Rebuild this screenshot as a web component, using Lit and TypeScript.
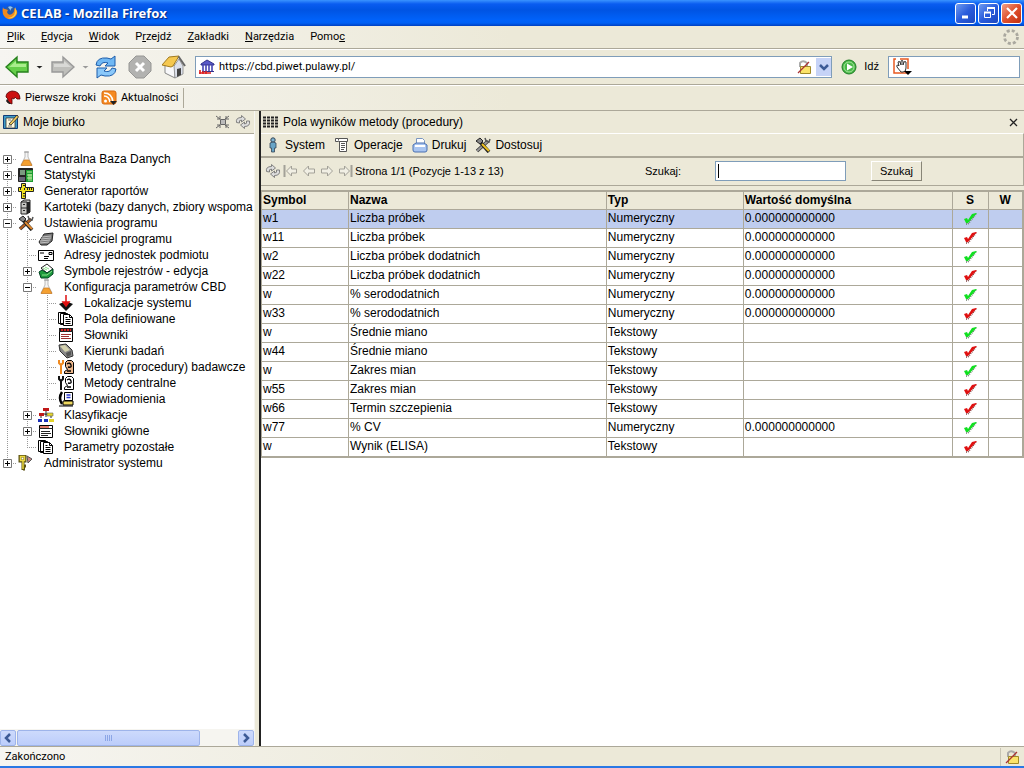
import { LitElement, html, css, svg, nothing, TemplateResult } from "lit";
import { customElement } from "lit/decorators.js";
import { classMap } from "lit/directives/class-map.js";

const flask = svg`<path d="M7 1h3v5l4 8H3l4-8z" fill="#f4f4f4" stroke="#aaa" stroke-width=".8"/><path d="M6 9h5l3 5.5H3z" fill="#f4a030" stroke="#c87820" stroke-width=".7"/><path d="M6 1h5" stroke="#999"/>`;
const pages = svg`<path d="M.5 1.500h7v11h-7zM2.500 2.500h7v11h-7z" fill="#fff" stroke="#000"/><path d="M5.500 3.500h6l3 3v8h-9z" fill="#fff" stroke="#000"/><path d="M11.500 3.500v3h3M7.500 6.500h2M7.500 8.500h5M7.500 10.500h5M7.500 12.500h5" fill="none" stroke="#000"/>`;
const method = (wrench: string, skin: string) => svg`<path d="M1 1v3l2 2 2-2V1M3 5v10" fill="none" stroke="${wrench}" stroke-width="2"/><path d="M7.500 3.500l2-2h4l2 2v11h-9v-2l3-2-2-3z" fill="${skin}" stroke="#000"/><path d="M9 5q3-2 4 1t-3 2M9 12h4" fill="none" stroke="#000" stroke-width="1.300"/>`;
const cycle = svg`<path d="M1.500 8.500q-1-5 5-5V1.500l4 3.500-4 3v-2q-3 0-2 3zM14.500 7q1 5.500-5 5.500v2l-4-3.500 4-3v2q3 0 2-3z" fill="#ddd" stroke="#777" stroke-width=".9"/>`;
const pageArrow = svg`<path d="M2.500 8l5-5v3h6v4h-6v3z" fill="#f1efe4" stroke="#a3a198"/>`;
const lock = svg`<path d="M4 8V4q3-3.500 7 0v3" fill="none" stroke="#aaa" stroke-width="2"/><path d="M4.500 7.500h10v7h-10z" fill="#fbe36a" stroke="#a08a28"/><path d="M2 14L13 3" stroke="#a33" stroke-width="1.200"/>`;
const tools = (a: string, b: string) => svg`<path d="M2 14L13 4" stroke="#333" stroke-width="3.500"/><path d="M2 14L13 4" stroke="${a}" stroke-width="2"/><path d="M10 1l1 3 3 1 1-3" fill="none" stroke="#555" stroke-width="1.500"/><path d="M1 4l4-3 3 3-3 3z" fill="#888" stroke="#222"/><path d="M6 6l8 9" stroke="#222" stroke-width="3.500"/><path d="M7 7l7 7" stroke="${b}" stroke-width="2"/>`;
const check = (fill: string, shade: string) => svg`<path d="M4 13h2l8-10" fill="none" stroke="${shade}" stroke-width="1.500" stroke-dasharray="1 1"/><path d="M2 8l3-1 1 2 4-6 4-1h1L6 12H4z" fill="${fill}"/>`;

const icons: Record<string, TemplateResult<2>> = {
  firefox: svg`<circle cx="8" cy="7" r="6" fill="#2a5ba8"/><path d="M6 2q3-2 5 1-3 0-2 3z" fill="#8cc4f4"/><path d="M1 2q0 2 2 2l3 1-1 2q1 4 5 2 3-2 2-6 4 2 3 6-3 6-9 5-7-3-5-12z" fill="#f08a20"/><path d="M13 2q3 5 0 9-3 3-7 2 9-1 7-11z" fill="#fbd04a"/>`,
  min: svg`<path d="M4 12h6" stroke="#fff" stroke-width="3"/>`,
  restore: svg`<path d="M6.500 6V3.500h7v6H11" fill="none" stroke="#fff"/><path d="M6 3h8" stroke="#fff" stroke-width="2"/><path d="M3.500 7.500h6v5h-6z" fill="none" stroke="#fff"/><path d="M3 7.500h7" stroke="#fff" stroke-width="2"/>`,
  closeWin: svg`<path d="M3 3l10 10M13 3L3 13" stroke="#fff" stroke-width="2.200"/>`,
  back: svg`<path d="M1 12L12 2v5h11v10H12v5z" fill="#65ce49" stroke="#26801c" stroke-width="1.400"/><path d="M4 12l7-6v3h10v3z" fill="#a9ed8c"/>`,
  forward: svg`<path d="M23 12L12 2v5H1v10h11v5z" fill="#bfbfbb" stroke="#999" stroke-width="1.400"/><path d="M20 12l-7-6v3H3v3z" fill="#d9d9d6"/>`,
  reload: svg`<path d="M2 10q1-8 11-7l4 1 4-3v10H11l3-3q-6-2-8 3z" fill="#70b8f4" stroke="#1c5caa"/><path d="M22 14q-1 8-11 7l-4-1-4 3V13h10l-3 3q6 2 8-3z" fill="#8ac8fa" stroke="#1c5caa"/>`,
  stop: svg`<path d="M8 1h8l7 7v8l-7 7H8l-7-7V8z" fill="#b2b2b0" stroke="#969694"/><path d="M8 8l8 8M16 8l-8 8" stroke="#fff" stroke-width="3"/>`,
  home: svg`<path d="M3 11v7l10 5V11L8 5z" fill="#f8f8fa" stroke="#888"/><path d="M13 23l8-4v-8l-4-7-5 7z" fill="#dde1ec" stroke="#888" stroke-width=".8"/><path d="M0 10L7 2l10-1-6 10-2 1z" fill="#f5c850" stroke="#a07a20"/><path d="M16.500 1.500L23 11" stroke="#666" stroke-width="2"/><path d="M15 14l4-1v7l-4 2z" fill="#444"/>`,
  site: svg`<path d="M2 5l6-4 7 4v1H2z" fill="#5a5ac8" stroke="#33338c"/><path d="M4 6v7M7 6v7M10 6v7M13 6v7" stroke="#4646b4" stroke-width="1.600"/><path d="M3 12.500h12" stroke="#33338c"/><path d="M0 14h12M1 11v4M4 12v3M7 12v3" stroke="#dd2020" stroke-width="1.600"/>`,
  lock,
  go: svg`<circle cx="8" cy="8" r="7" fill="#49b848" stroke="#1d7c24"/><circle cx="8" cy="8" r="5" fill="none" stroke="#a4e49a"/><path d="M6 4.500l6 3.500-6 3.500z" fill="#fff"/>`,
  throbber: svg`<circle cx="8" cy="8" r="6.500" fill="none" stroke="#aaa89f" stroke-width="2.800" stroke-dasharray="3 2.100"/>`,
  hand: svg`<path d="M4 1H2v14h14" fill="none" stroke="#e85a20" stroke-width="1.500"/><path d="M8 1h8v10" fill="none" stroke="#e85a20" stroke-width="1.500"/><path d="M5 9q-1-2 1-2l1 1-1-4q1-1 2 0l1 3V3q1-1 2 0v4l1-3q1-1 2 0v6q0 4-3 4H9z" fill="#fff" stroke="#333"/><path d="M12 13h8l-4 4z" fill="#000"/>`,
  dino: svg`<path d="M1 7q0-5 6-6 8 0 8 8h-3l-2-2-1 2-2-1v6l-5-2 1-3z" fill="#cc1010" stroke="#500" stroke-width=".8"/><path d="M2 9l4 5H4L1 11z" fill="#222"/>`,
  rss: svg`<rect x="1" y="1" width="14" height="13" rx="2" fill="#f58a22" stroke="#d86a10"/><circle cx="4.500" cy="11" r="1.500" fill="#fff"/><path d="M3 6q5 0 6 6M3 3q8 0 9 9" fill="none" stroke="#fff" stroke-width="1.600"/><path d="M9 11h7l-3.500 4z" fill="#222"/>`,
  desk: svg`<path d="M.5 1.500h14v13H.5z" fill="#3e9cc8" stroke="#123c78"/><path d="M3 4h9v10H3z" fill="#fffbe0" stroke="#333" stroke-width=".8"/><path d="M6 10L14 1l1.500 2L8 11z" fill="#f5d060" stroke="#222" stroke-width=".8"/><path d="M5 6h3M5 12h4" stroke="#777"/>`,
  shrink: svg`<path d="M5.500 5.500h5v5h-5z" fill="#bbb" stroke="#666"/><path d="M1 2l4 3M5 2v3H2M14 2l-4 3M11 2v3h3M1 14l4-3M5 14v-3H2M14 14l-4-3M11 14v-3h3" fill="none" stroke="#666"/>`,
  cycle,
  flask,
  stats: svg`<path d="M.5 1.500h14v13H.5z" fill="#222" stroke="#222"/><path d="M2 3h5v5H2z" fill="#7a9a80"/><path d="M8 3h7v12H8z" fill="#1a9a30"/><path d="M9 5h5M9 8h5M9 11h5M11 7v7M13 7v7" stroke="#c0f0a0"/><path d="M1 10h6v4H1z" fill="#667"/>`,
  ruler: svg`<path d="M3.500.5h4v4h8v4h-8v7h-4v-7h-3v-4h3z" fill="#f4e420" stroke="#222"/><path d="M2.500 5v2M5 2.500h2M5 10.500h2M5 13h2M9.500 5v2M11.500 5v2M13.500 5v2M6.500 5v2" stroke="#222"/>`,
  cabinet: svg`<path d="M3 3l3-2h6v12l-3 2H3z" fill="#c6c6c2" stroke="#222"/><path d="M9 3h3v11H9z" fill="#222"/><path d="M3 3h6v12M3 9h6M5 5.500h2M5 11.500h2" fill="none" stroke="#222"/>`,
  hammer: tools("#b86020", "#e08a30"),
  owner: svg`<path d="M1 11l5-8 9-1-1 8-5 4H3z" fill="#777" stroke="#222"/><path d="M4 6l9-1M3 8l10-1M2 10l10-1M2 12l9-1" stroke="#c0c0c0"/>`,
  card: svg`<path d="M.5 3.500h15v10H.5z" fill="#fff" stroke="#000"/><path d="M2 6h4M11 5.500h3v2h-3zM6 9.500h5M6 11.500h4" fill="none" stroke="#000"/>`,
  registers: svg`<path d="M3 5l6-4 6 5-6 4z" fill="#fff" stroke="#222"/><path d="M1 9l3-2 5 3 6-4v5l-5 4H3z" fill="#1c9a3c" stroke="#042"/><path d="M5 5l4 2M7 4l4 2M4 12h5l5-4" fill="none" stroke="#8be08b"/>`,
  pin: svg`<path d="M1 9l5-2h4l5 2-4 4-3 3-3-3z" fill="#111"/><path d="M8 0v9M5 7l3 4 3-4z" fill="#e01010" stroke="#e01010" stroke-width="1.500"/>`,
  pages,
  dict: svg`<path d="M1.500 1.500h13v13h-13z" fill="#fff" stroke="#000"/><path d="M1 1h14v4H1z" fill="#222"/><path d="M3 3h10" stroke="#e02020" stroke-width="2" stroke-dasharray="2 1"/><path d="M3 7.500h10M3 9.500h8M3 11.500h10" stroke="#a03030"/>`,
  research: svg`<path d="M1 2l7-1 6 6 1 6-6 2-7-7z" fill="#888" stroke="#333"/><path d="M2 3l5-1 5 5-5 2z" fill="#d4d2ae"/><path d="M8 10l5-2v4l-4 2z" fill="#555"/>`,
  methodOn: method("#f08a20", "#ecb68a"),
  method: method("#111", "#fff"),
  notify: svg`<path d="M6.500 1.500h8v8h-8z" fill="#fff" stroke="#000"/><path d="M8.500 4h4M8.500 6.500h4" stroke="#2a3ad0" stroke-width="1.500"/><path d="M5 10h10v4H5z" fill="#eed860" stroke="#000"/><path d="M4 1q-4 6 0 12" fill="none" stroke="#000" stroke-width="2.500"/><path d="M1 15h14" stroke="#000"/>`,
  classes: svg`<path d="M8 3v5M3 11V7h10v4M8 7v3" fill="none" stroke="#222"/><path d="M5 1h6v3H5z" fill="#c01818"/><path d="M1 6h5v3H1z" fill="#c01818"/><path d="M9 6h6v3H9z" fill="#e4d42c" stroke="#665" stroke-width=".6"/><path d="M0 12h4v3H0zM6 12h4v3H6z" fill="#1c30b8"/><path d="M11 12h5v3h-5z" fill="#e4d42c"/>`,
  mainDict: svg`<path d="M1.500 2.500h13v12h-13z" fill="#fff" stroke="#000"/><path d="M2 3h9v2H2z" fill="#e07a6a"/><path d="M1 5.500h14M3 8.500h9M3 10.500h10M3 12.500h7" stroke="#222"/>`,
  keys: svg`<path d="M2 1h5v5H2zM5 6v9M5 11h3M5 14h2" fill="none" stroke="#5a5010" stroke-width="3"/><path d="M2.500 1.500h4v4h-4zM5 6v8" fill="none" stroke="#ecd840" stroke-width="1.500"/><path d="M9 1l5 3-4 4z" fill="#c88" stroke="#555"/>`,
  grid: svg`<path d="M0 3.500h15M0 6.500h15M0 9.500h15M0 12.500h15" stroke="#222" stroke-width="2" stroke-dasharray="3 1"/>`,
  person: svg`<circle cx="8" cy="3" r="2.200" fill="#7eb4d2" stroke="#345"/><path d="M5 6q3-2 6 0v5H9.500v4h-3v-4H5z" fill="#68a4c6" stroke="#345" stroke-width=".8"/>`,
  script: svg`<path d="M4.500 3.500V1.500h-3v3h3M4.500 1.500h9v3h-9M5.500 4v10.500h7V4.500" fill="#fff" stroke="#555"/><path d="M7 6.500h4M7 8.500h4M7 10.500h4M7 12.500h3" stroke="#555"/>`,
  printer: svg`<path d="M4.500 8V1.500h6l2 2V8" fill="#fff" stroke="#7a96c0"/><path d="M1 8l3-2h8l3 2v5q0 2-2 2H3q-2 0-2-2z" fill="#a8c4f0" stroke="#4a70b0"/><path d="M3 9h10" stroke="#fff" stroke-width="2"/>`,
  adjust: tools("#999", "#ecc020"),
  prev: pageArrow,
  next: svg`<g transform="translate(16 0) scale(-1 1)">${pageArrow}</g>`,
  first: svg`<path d="M1.500 2v12" stroke="#a3a198" stroke-width="2"/><path d="M3.500 8l5-5v3h5v4h-5v3z" fill="#f1efe4" stroke="#a3a198"/>`,
  last: svg`<path d="M14.500 2v12" stroke="#a3a198" stroke-width="2"/><path d="M12.500 8l-5-5v3h-5v4h5v3z" fill="#f1efe4" stroke="#a3a198"/>`,
  close: svg`<path d="M5 5l7 7M12 5l-7 7" stroke="#222" stroke-width="1.300"/>`,
  ok: check("#10e020", "#6a7a6a"),
  no: check("#e01010", "#804040"),
  left: svg`<path d="M10 4L6 8l4 4" fill="none" stroke="#3c5a96" stroke-width="2.500"/>`,
  right: svg`<path d="M6 4l4 4-4 4" fill="none" stroke="#3c5a96" stroke-width="2.500"/>`,
  down: svg`<path d="M4 6l4 4 4-4" fill="none" stroke="#3c5a96" stroke-width="2.500"/>`,
};

const icon = (name: string, size = 16) =>
  html`<svg class="icon" width=${size} height=${size} viewBox=${size === 24 ? "0 0 24 24" : "0 0 16 16"} aria-hidden="true">${icons[name]}</svg>`;

interface Node { label: string; icon: string; open?: boolean; children?: Node[] }
const leaf = (label: string, icon: string): Node => ({ label, icon });
const closed = (label: string, icon: string): Node => ({ label, icon, open: false });

const tree: Node[] = [
  closed("Centralna Baza Danych", "flask"),
  closed("Statystyki", "stats"),
  closed("Generator raportów", "ruler"),
  closed("Kartoteki (bazy danych, zbiory wspoma", "cabinet"),
  { label: "Ustawienia programu", icon: "hammer", open: true, children: [
    leaf("Właściciel programu", "owner"),
    leaf("Adresy jednostek podmiotu", "card"),
    closed("Symbole rejestrów - edycja", "registers"),
    { label: "Konfiguracja parametrów CBD", icon: "flask", open: true, children: [
      leaf("Lokalizacje systemu", "pin"),
      leaf("Pola definiowane", "pages"),
      leaf("Słowniki", "dict"),
      leaf("Kierunki badań", "research"),
      leaf("Metody (procedury) badawcze", "methodOn"),
      leaf("Metody centralne", "method"),
      leaf("Powiadomienia", "notify"),
    ] },
    closed("Klasyfikacje", "classes"),
    closed("Słowniki główne", "mainDict"),
    leaf("Parametry pozostałe", "pages"),
  ] },
  closed("Administrator systemu", "keys"),
];

const N = "Numeryczny", T = "Tekstowy", Z = "0.000000000000";
const rows: [string, string, string, string, boolean][] = [
  ["w1", "Liczba próbek", N, Z, true],
  ["w11", "Liczba próbek", N, Z, false],
  ["w2", "Liczba próbek dodatnich", N, Z, true],
  ["w22", "Liczba próbek dodatnich", N, Z, false],
  ["w", "% serododatnich", N, Z, true],
  ["w33", "% serododatnich", N, Z, false],
  ["w", "Średnie miano", T, "", true],
  ["w44", "Średnie miano", T, "", false],
  ["w", "Zakres mian", T, "", true],
  ["w55", "Zakres mian", T, "", false],
  ["w66", "Termin szczepienia", T, "", false],
  ["w77", "% CV", N, Z, true],
  ["w", "Wynik (ELISA)", T, "", false],
];

const menu: [string, string, string][] = [
  ["", "P", "lik"], ["", "E", "dycja"], ["", "W", "idok"], ["P", "r", "zejdź"],
  ["", "Z", "akładki"], ["", "N", "arzędzia"], ["Pomo", "c", ""],
];

@customElement("app-root")
export class AppRoot extends LitElement {
  static styles = css`
    :host { display: flex; flex-direction: column; height: 100vh; overflow: hidden; background: #ece9d8; color: #000; font: 12px/16px "Liberation Sans", Arial, sans-serif; }
    * { box-sizing: border-box; }
    button { display: flex; align-items: center; padding: 0; border: 0; background: none; color: inherit; font: inherit; white-space: nowrap; }
    a { color: inherit; text-decoration: none; }
    input { font: inherit; }
    .icon { display: block; flex: none; }
    .grow { flex: 1; }
    .title { display: flex; align-items: center; gap: 2px; height: 26px; flex: none; padding: 0 2px; background: linear-gradient(#3a93ff, #0a5cf0 4px, #0054e3 10px, #0062fa 20px, #0060f5 23px, #0040c0); color: #fff; }
    .title h1 { flex: 1; margin: 0 0 0 1px; font: bold 13px/20px "Noto Sans", sans-serif; text-shadow: 1px 1px 1px #0a2a80; }
    .title button { width: 21px; height: 21px; justify-content: center; border: 1px solid #fff; border-radius: 3px; background: linear-gradient(135deg, #6f9bf0, #2a5cdc 50%, #1c48c0); }
    .title .quit { background: linear-gradient(135deg, #f0a088, #e0502c 50%, #c03010); }
    .chrome { font: 11px/14px Roboto, Tahoma, sans-serif; flex: none; display: flex; align-items: center; background: linear-gradient(90deg, #f6f5f1, #ece9d8 50%); }
    .menubar { height: 23px; padding: 0 5px 0 7px; gap: 16px; border-bottom: 1px solid #aca899; }
    .nav { height: 36px; padding: 0 4px 0 5px; border-top: 1px solid #fff; border-bottom: 1px solid #aca899; }
    .tri { width: 7px; height: 3px; margin: 0 8px 0 7px; background: #222; clip-path: polygon(0 0, 100% 0, 50% 100%); }
    .tri.off { margin: 0 5px 0 7px; background: #999; }
    .nav .reload { margin-right: 10px; }
    .nav .stop { margin-right: 10px; }
    .field { display: flex; align-items: center; height: 22px; border: 1px solid #7f9db9; background: #fff; }
    .url { flex: 1; margin: 0 9px 0 9px; padding: 1px 0 1px 3px; gap: 4px; }
    .field input { flex: 1; min-width: 0; padding: 0; border: 0; outline: 0; background: none; }
    .drop { width: 15px; height: 18px; justify-content: center; background: #c6d3f7; }
    .go { gap: 7px; margin-right: 9px; }
    .find { width: 132px; padding-left: 3px; }
    .bookmarks { height: 26px; padding: 0 5px; border-top: 1px solid #fff; border-bottom: 1px solid #aca899; }
    .bookmarks a { display: flex; align-items: center; gap: 4px; margin-right: 5px; }
    .bookmarks i { width: 1px; height: 20px; background: #aca899; }
    .main { flex: 1; min-height: 0; display: flex; }
    .side { flex: none; width: 254px; display: flex; flex-direction: column; background: #fff; }
    .sidehead { display: flex; align-items: center; gap: 4px; height: 23px; padding: 0 3px; background: #ece9d8; border-bottom: 1px solid #aca899; }
    .split { width: 7px; flex: none; border-left: 1px solid #f6f5f1; border-right: 2px solid #222; background: #ece9d8; }
    .tree { flex: 1; min-height: 0; margin: 0; padding: 17px 0 0 0; overflow: hidden; list-style: none; }
    .node { display: flex; align-items: center; height: 16px; white-space: nowrap; overflow: hidden; }
    .node .icon { margin-right: 10px; }
    .branch { display: block; flex: none; }
    .scroll { display: flex; align-items: center; height: 17px; flex: none; background: #f6f5f0; gap: 1px; }
    .scroll button, .thumb { height: 16px; border: 1px solid #9eb4ea; border-radius: 2px; background: linear-gradient(#cddafc, #bccdfb); }
    .scroll button { width: 16px; justify-content: center; }
    .thumb { width: 72%; display: flex; align-items: center; justify-content: center; gap: 1px; }
    .thumb i { width: 1px; height: 6px; background: #8ca6e6; }
    .panel { flex: 1; min-width: 0; display: flex; flex-direction: column; background: #fff; }
    .bar { display: flex; align-items: center; background: #ece9d8; flex: none; }
    .head { height: 22px; gap: 4px; padding: 0 3px 0 2px; }
    .head h2, .sidehead h2 { flex: 1; margin: 0; font: inherit; }
    .tools { height: 23px; gap: 9px; padding: 0 4px; border-top: 1px solid #fff; border-right: 1px solid #aca899; }
    .tools button { gap: 4px; }
    .paging { height: 30px; padding: 0 101px 1px 4px; gap: 2px; border: 1px solid #aca899; border-top-width: 2px; border-left: 0; font-size: 11px; }
    .paging .pos { white-space: nowrap; }
    .search { display: flex; align-items: center; margin-left: auto; }
    .query { position: relative; margin: 0 25px 0 34px; }
    .query input { display: block; width: 131px; height: 20px; border: 1px solid #7f9db9; padding: 0 4px; background: #fff; }
    .caret { position: absolute; left: 3px; top: 3px; width: 1px; height: 14px; background: #000; }
    .search button { width: 51px; height: 20px; justify-content: center; border: 1px solid; border-color: #fff #888577 #888577 #fff; background: #ece9d8; }
    .spacer { height: 4px; flex: none; background: #ece9d8; }
    table { width: 100%; table-layout: fixed; border-collapse: collapse; border: 2px solid #aca899; border-left-width: 1px; flex: none; }
    th, td { height: 19px; padding: 0 0 0 1px; border: 1px solid #aca899; text-align: left; white-space: nowrap; overflow: hidden; line-height: 16px; }
    th { height: 18px; background: #ece9d8; }
    td { padding: 0 0 2px 1px; }
    .mid { text-align: center; padding: 0; }
    .mid .icon { margin: 0 auto; }
    .c-symbol { width: 87px; } .c-type { width: 18%; } .c-value { width: 27.4%; } .c-s { width: 36px; } .c-w { width: 35px; }
    .selected td { background: #bfcdef; }
    .status { height: 22px; padding: 0 4px 0 5px; border-top: 1px solid #aca899; border-bottom: 2px solid #2a78e4; }
    .security { display: flex; align-items: center; height: 18px; padding-left: 3px; border-left: 1px solid #c8c5b4; }
  `;

  private branch(depth: number, guides: boolean[], node: Node, first: boolean, last: boolean) {
    const x = depth * 20 + 7;
    const own = depth * 20 + 18;
    const dots = (x1: number, y1: number, x2: number, y2: number) =>
      svg`<path d="M${x1} ${y1}L${x2} ${y2}" stroke="#999" stroke-dasharray="1 1"/>`;
    return html`<svg class="branch" width=${own} height="16" viewBox="0 0 ${own} 16" aria-hidden="true">
      ${guides.map((on, i) => (on ? dots(i * 20 + 7.5, 0, i * 20 + 7.5, 16) : nothing))}
      ${dots(x + 0.5, first ? 8 : 0, x + 0.5, last ? 8 : 16)}
      ${dots(x, 8.5, own - 2, 8.5)}
      ${node.open === undefined ? nothing : svg`<path d="M${x - 3.5} 4.500h8v8h-8z" fill="#fff" stroke="#777"/><path d="M${x - 2} 8.500h5${node.open ? "" : `M${x + 0.5} 6v5`}" stroke="#000"/>`}
    </svg>`;
  }

  private nodes(list: Node[], depth = 0, guides: boolean[] = []): unknown {
    return list.map((n, i) => {
      const last = i === list.length - 1;
      return html`<li class="node" role="treeitem" aria-level=${depth + 1}>${this.branch(depth, guides, n, depth === 0 && i === 0, last)}${icon(n.icon)}<a href="#">${n.label}</a></li>
      ${n.children ? this.nodes(n.children, depth + 1, [...guides, !last]) : nothing}`;
    });
  }

  render() {
    return html`
      <header class="title">
        ${icon("firefox")}<h1>CELAB - Mozilla Firefox</h1>
        <button aria-label="Minimalizuj">${icon("min")}</button>
        <button aria-label="Przywróć">${icon("restore")}</button>
        <button class="quit" aria-label="Zamknij">${icon("closeWin")}</button>
      </header>
      <nav class="chrome menubar">
        ${menu.map(([a, k, b]) => html`<button><span>${a}<u>${k}</u>${b}</span></button>`)}
        <span class="grow"></span>${icon("throbber")}
      </nav>
      <div class="chrome nav">
        <button aria-label="Wstecz">${icon("back", 24)}<i class="tri"></i></button>
        <button aria-label="Dalej">${icon("forward", 24)}<i class="tri off"></i></button>
        <button class="reload" aria-label="Odśwież">${icon("reload", 24)}</button>
        <button class="stop" aria-label="Zatrzymaj">${icon("stop", 24)}</button>
        <button aria-label="Strona startowa">${icon("home", 24)}</button>
        <div class="field url">${icon("site")}<input aria-label="Adres" value="https://cbd.piwet.pulawy.pl/" />${icon("lock")}
          <button class="drop" aria-label="Historia adresów">${icon("down")}</button></div>
        <button class="go">${icon("go")}Idź</button>
        <div class="field find"><svg class="icon" width="20" height="18" viewBox="0 0 20 18" aria-hidden="true">${icons.hand}</svg><input aria-label="Szukaj w sieci" /></div>
      </div>
      <nav class="chrome bookmarks">
        <a href="#">${icon("dino")}Pierwsze kroki</a><a href="#">${icon("rss")}Aktualności</a><i></i>
      </nav>
      <main class="main">
        <aside class="side">
          <div class="sidehead">${icon("desk")}<h2>Moje biurko</h2>
            <button aria-label="Zwiń">${icon("shrink")}</button><button aria-label="Odśwież drzewo">${icon("cycle")}</button></div>
          <ul class="tree" role="tree">${this.nodes(tree)}</ul>
          <div class="scroll"><button aria-label="W lewo">${icon("left")}</button>
            <div class="thumb"><i></i><i></i><i></i><i></i></div><span class="grow"></span>
            <button aria-label="W prawo">${icon("right")}</button></div>
        </aside>
        <div class="split"></div>
        <section class="panel">
          <div class="bar head">${icon("grid")}<h2>Pola wyników metody (procedury)</h2><button aria-label="Zamknij panel">${icon("close")}</button></div>
          <div class="bar tools">
            <button>${icon("person")}System</button><button>${icon("script")}Operacje</button>
            <button>${icon("printer")}Drukuj</button><button>${icon("adjust")}Dostosuj</button>
          </div>
          <div class="bar paging">
            <button aria-label="Odśwież listę">${icon("cycle")}</button>
            <button aria-label="Pierwsza strona">${icon("first")}</button><button aria-label="Poprzednia strona">${icon("prev")}</button>
            <button aria-label="Następna strona">${icon("next")}</button><button aria-label="Ostatnia strona">${icon("last")}</button>
            <span class="pos">Strona 1/1 (Pozycje 1-13 z 13)</span>
            <div class="search"><label for="q">Szukaj:</label>
              <div class="query"><input id="q" /><i class="caret"></i></div><button>Szukaj</button></div>
          </div>
          <div class="spacer"></div>
          <table>
            <colgroup><col class="c-symbol" /><col /><col class="c-type" /><col class="c-value" /><col class="c-s" /><col class="c-w" /></colgroup>
            <thead><tr><th>Symbol</th><th>Nazwa</th><th>Typ</th><th>Wartość domyślna</th><th class="mid">S</th><th class="mid">W</th></tr></thead>
            <tbody>${rows.map(([s, n, t, v, ok], i) => html`<tr class=${classMap({ selected: i === 0 })}>
              <td>${s}</td><td>${n}</td><td>${t}</td><td>${v}</td><td class="mid">${icon(ok ? "ok" : "no")}</td><td></td></tr>`)}</tbody>
          </table>
        </section>
      </main>
      <footer class="chrome status"><span class="grow">Zakończono</span><span class="security">${icon("lock")}</span></footer>
    `;
  }
}
